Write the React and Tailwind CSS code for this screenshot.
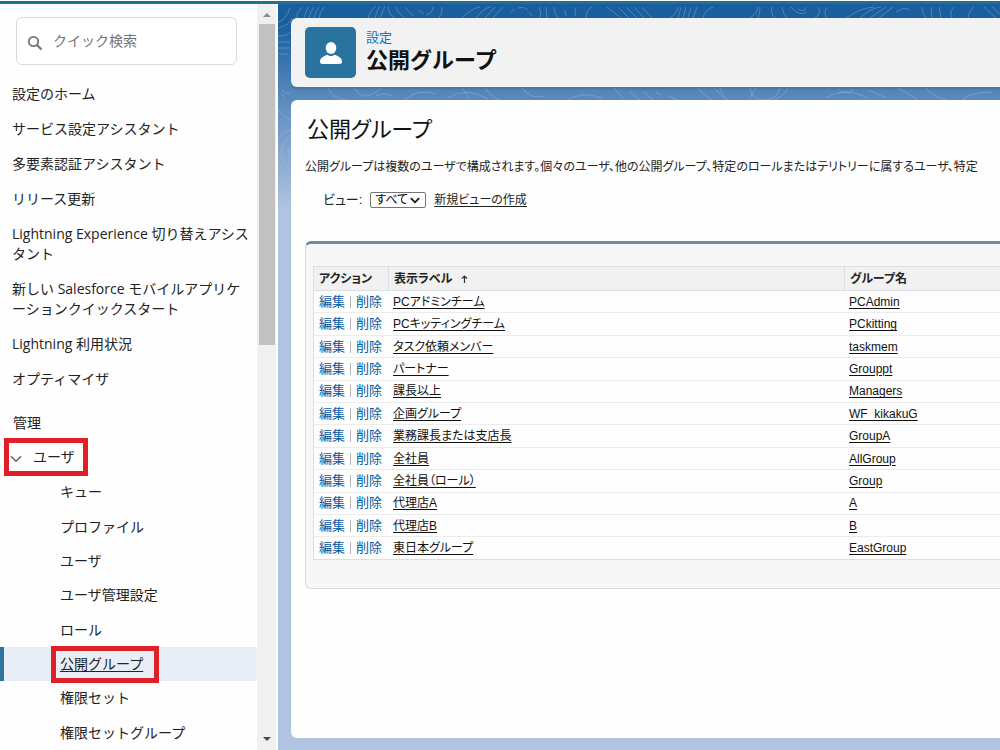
import React from "react";

const topLinks = [
  "設定のホーム",
  "サービス設定アシスタント",
  "多要素認証アシスタント",
  "リリース更新",
  "Lightning Experience 切り替えアシスタント",
  "新しい Salesforce モバイルアプリケーションクイックスタート",
  "Lightning 利用状況",
  "オプティマイザ",
];

const userLinks = [
  "キュー",
  "プロファイル",
  "ユーザ",
  "ユーザ管理設定",
  "ロール",
  "公開グループ",
  "権限セット",
  "権限セットグループ",
];

const groups = [
  ["PCアドミンチーム", "PCAdmin"],
  ["PCキッティングチーム", "PCkitting"],
  ["タスク依頼メンバー", "taskmem"],
  ["パートナー", "Grouppt"],
  ["課長以上", "Managers"],
  ["企画グループ", "WF_kikakuG"],
  ["業務課長または支店長", "GroupA"],
  ["全社員", "AllGroup"],
  ["全社員（ロール）", "Group"],
  ["代理店A", "A"],
  ["代理店B", "B"],
  ["東日本グループ", "EastGroup"],
];

function Sidebar() {
  return (
    <nav className="flex w-[257px] shrink-0 flex-col bg-[#fefefe] text-sm text-[#222]">
      <label className="mt-[13px] mr-5 ml-4 flex h-12 shrink-0 items-center gap-[10px] rounded-md border border-[#d8d8d8] bg-white px-[10px]">
        <svg className="mt-1 size-4 shrink-0 text-[#747474]" viewBox="0 0 16 16" fill="none" stroke="currentColor" strokeWidth="1.8">
          <circle cx="6.500" cy="6.500" r="4.700" />
          <path d="M10 10l4.500 4.500" strokeWidth="2.200" />
        </svg>
        <input
          type="search"
          aria-label="クイック検索"
          placeholder="クイック検索"
          className="min-w-0 flex-1 bg-transparent outline-none placeholder:text-[#747474]"
        />
      </label>
      <ul className="mt-3 shrink-0 leading-5">
        {topLinks.map((label) => (
          <li key={label} className="pt-[7px] pr-1 pb-2 pl-3 break-all">
            <a href="#">{label}</a>
          </li>
        ))}
      </ul>
      <h2 className="mt-[9px] shrink-0 pt-[7px] pb-[5px] pl-[13px] leading-5">管理</h2>
      <button
        type="button"
        aria-expanded="true"
        className="ml-1 flex h-[38px] w-21 shrink-0 items-center gap-[11px] border-5 border-[#df2029] pl-[1px] text-left"
      >
        <svg className="mt-1 h-2 w-3 shrink-0" viewBox="0 0 12 8" fill="none" stroke="#666" strokeWidth="1.5">
          <path d="M1 1.2l5 5 5-5" />
        </svg>
        ユーザ
      </button>
      <ul className="-mt-px grid flex-1 auto-rows-fr">
        {userLinks.map((label) =>
          label === "公開グループ" ? (
            <li key={label} className="flex items-center border-l-4 border-[#2f759e] bg-[#e9eef6] pl-[47px]">
              <a href="#" aria-current="page" className="-my-[2px] flex h-[37px] w-[108px] items-center border-5 border-[#df2029] pl-1 underline underline-offset-2">
                {label}
              </a>
            </li>
          ) : (
            <li key={label} className="flex items-center pl-15">
              <a href="#">{label}</a>
            </li>
          )
        )}
      </ul>
    </nav>
  );
}

function ScrollTrack() {
  return (
    <div className="flex w-[21px] shrink-0 flex-col items-center border-r-2 border-white bg-[#f0f0f0]" aria-hidden="true">
      <svg className="mt-[9px] mb-[7px] h-1 w-2" viewBox="0 0 8 4" fill="#8b8b8b">
        <path d="M4 0l4 4H0z" />
      </svg>
      <div className="h-[321px] w-4 bg-[#c1c1c1]" />
      <svg className="mt-auto mb-[9px] h-1 w-2" viewBox="0 0 8 4" fill="#4a4a4a">
        <path d="M0 0h8L4 4z" />
      </svg>
    </div>
  );
}

function Contours() {
  return (
    <svg className="absolute inset-x-0 top-0 h-[220px] w-[722px]" viewBox="0 0 722 220" fill="none" stroke="#a9c8e6" strokeOpacity="0.36" strokeWidth="1" aria-hidden="true">
      <path d="M0 18q8-2 12-14M0 24q12-3 14-10M0 32q10 0 13-4M0 38h12M0 44h12M0 50h10M18 14q1-6 6-11M26 14q1-6 5-11M31 14q1-6 5-11M36 14q1-6 5-11M41 14q1-6 5-11" />
      <path d="M90 14q2-8 8-12M97 14q2-8 5-12M102 14l5-12M110 3q1 8 7 11M118 3q3 8 9 11M127 3q4 6 9 9M140 6l6 4M148 11q7-2 7-8M161 14q4-5 3-11" />
      <path d="M184 14q10-10 18-11M198 14q8-10 14-11M207 14l10-11M215 14l10-11M233 8l4-3M240 4q6-2 10 2M254 12l-3-4M262 14q2-6-1-11M268 3l1 11M276 3q0 6 4 11M287 6l1 6M298 3l-1 9M308 14q0-8 6-11" />
      <path d="M329 3l14 11M340 3l11 11M348 3l11 11M356 3l10 11M364 3l10 11M392 14q7-4 8-11M400 14l3-11M405 14l3-11M410 14l3-11M415 14l4-11M425 14q2-8 10-11" />
      <path d="M472 14q7-4 8-11M480 14q2-5 2-11M494 3q-2 6 3 11M504 3q1 7 5 11M513 3q8 10 15 5M528 3q-2 6-8 2M540 3q4 6-3 11M549 3q-4 6 0 11" />
      <path d="M568 14q14-10 28-11M582 14q10-10 21-11M592 14l16-11M601 14l14-11M618 8q8-6 14-2M644 3q0 6 4 11M653 3l1 11M661 3l2 11M674 14q-3-6 2-11M690 14q1-8 6-11M706 3l12 11M714 3l8 7" />
      <path d="M4 86q2 4 8 4M50 84q4 10 18 12M76 84q9 16 27 0M98 92q8-4 16 0M126 96q14-12 32-6M184 84l8 12M208 84q4 9 14 12M170 94q18-12 40 1M244 84q10 12 22 8M286 98q16-12 38-4M336 84l11 12M352 88l10 8" />
      <path d="M366 88q4 4 10 8M378 88l5 3M390 92l10 4M420 84q6 8 14 12M436 84q8 8 12 12M442 84q2 8 8 12M472 84q1 12 14 12t16-12M478 84q-6 8-6 12M510 84q-4 8-14 12M548 94q18-12 42 0M560 84q4 8 16 2M590 86l18 8M620 84l20 12M648 84q6 8 20 12M684 96q8-8 30-8" />
      <path d="M0 106q6 8 13 10M3 90l4 3M13 127q-10 0-10 6M13 130Q3 140 3 150q2 10 10 14M13 142q-5 8 0 16" />
    </svg>
  );
}

function GroupTable() {
  return (
    <section className="mt-8 ml-[14px] rounded-l-md border border-t-3 border-r-0 border-[#d9dcdf] border-t-[#76889a] bg-[#f7f7f7] pt-[22px] pb-7 pl-[7px]">
      <table className="h-[294px] w-full table-fixed border-separate border-spacing-0 border-l border-[#dcdfe1] bg-[#fefefe] text-left text-xs leading-4 text-[#111]">
        <thead className="bg-[#f1f1f1] text-[#222]">
          <tr className="h-[25px]">
            <th className="w-[75px] border-y border-r border-[#dcdfe1] pl-[5px]">アクション</th>
            <th className="w-[456px] border-y border-r border-[#dcdfe1] pl-[5px]">
              <span className="inline-flex items-center gap-2">
                表示ラベル
                <svg className="h-2 w-[7px]" viewBox="0 0 7 8" fill="none" stroke="#333" strokeWidth="1.2" aria-label="昇順">
                  <path d="M3.5 8V1M1 3.5L3.5 1 6 3.5" />
                </svg>
              </span>
            </th>
            <th className="border-y border-[#dcdfe1] pl-[5px]">グループ名</th>
          </tr>
        </thead>
        <tbody>
          {groups.map(([label, name]) => (
            <tr key={name} className="group">
              <td className="border-b border-[#ececec] pl-[5px] text-[13px] whitespace-nowrap text-[#015ba7] group-last:border-[#dcdfe1]">
                <span className="flex items-center gap-[5px]">
                  <a href="#">編集</a>
                  <span className="h-3 w-px bg-[#b5b5b5]" />
                  <a href="#">削除</a>
                </span>
              </td>
              <td className="border-b border-[#ececec] pl-1 group-last:border-[#dcdfe1]">
                <a href="#" className="underline underline-offset-2">{label}</a>
              </td>
              <td className="border-b border-[#ececec] pl-1 group-last:border-[#dcdfe1]">
                <a href="#" className="underline underline-offset-2">{name}</a>
              </td>
            </tr>
          ))}
        </tbody>
      </table>
    </section>
  );
}

export default function App() {
  return (
    <div className="flex h-screen flex-col overflow-hidden bg-white pt-px font-['Open_Sans','Noto_Sans_CJK_JP',sans-serif]">
      <div className="h-[3px] shrink-0 bg-[#21708f]" />
      <div className="flex min-h-0 flex-1">
        <Sidebar />
        <ScrollTrack />
        <div className="relative min-w-0 flex-1 overflow-hidden bg-[linear-gradient(#195f9f_0px,#195f9f_20px,#5a8abd_95px,#b0c4e1_205px)]">
          <Contours />
          <div className="relative flex h-full flex-col gap-[13px] pt-[14px] pb-3 pl-[13px]">
            <header className="flex h-[69px] shrink-0 gap-[10px] rounded-l-md bg-[#f2f2f2] pt-[9px] pl-[14px] shadow-[0_2px_2px_rgba(0,0,0,0.12)]">
              <span className="flex size-[51px] items-center justify-center rounded-[5px] bg-[#2a739e]">
                <svg className="size-[22px]" viewBox="0 0 22 22" fill="#fff" aria-hidden="true">
                  <ellipse cx="11" cy="6" rx="5.3" ry="6" />
                  <path d="M0 19.5C0 15.5 4 14 7.4 12.7c2 1.7 5.2 1.7 7.2 0C18 14 22 15.5 22 19.500q0 2.500-2.500 2.500h-17Q0 22 0 19.500z" />
                </svg>
              </span>
              <div>
                <p className="mt-[2px] text-[13px] leading-4 text-[#0b76cf]">設定</p>
                <h1 className="text-[22px] leading-7 font-bold text-[#111]">公開グループ</h1>
              </div>
            </header>
            <main className="min-h-0 flex-1 overflow-hidden rounded-l-md bg-[#fefefe] font-['Liberation_Sans','Noto_Sans_CJK_JP',sans-serif] text-xs text-[#222] [font-feature-settings:'palt']">
              <h2 className="mt-[14px] ml-4 text-[22px] leading-8 text-[#111]">公開グループ</h2>
              <p className="mt-3 ml-[14px] leading-[18px] whitespace-nowrap">
                公開グループは複数のユーザで構成されます。個々のユーザ、他の公開グループ、特定のロールまたはテリトリーに属するユーザ、特定
              </p>
              <div className="mt-[15px] ml-8 flex h-[18px] items-center gap-2">
                <label htmlFor="view" className="text-[13px]">ビュー:</label>
                <span className="relative flex">
                  <select id="view" className="h-4 w-14 appearance-none rounded-[2px] border border-[#767676] bg-white pl-1 text-xs leading-3 text-black">
                    <option>すべて</option>
                  </select>
                  <svg className="pointer-events-none absolute top-[5px] right-[6px] h-[7px] w-[10px]" viewBox="0 0 11 7" fill="none" stroke="#111" strokeWidth="2" aria-hidden="true">
                    <path d="M1 1l4.500 4.500L10 1" />
                  </svg>
                </span>
                <a href="#" className="underline underline-offset-2">新規ビューの作成</a>
              </div>
              <GroupTable />
            </main>
          </div>
        </div>
      </div>
    </div>
  );
}
